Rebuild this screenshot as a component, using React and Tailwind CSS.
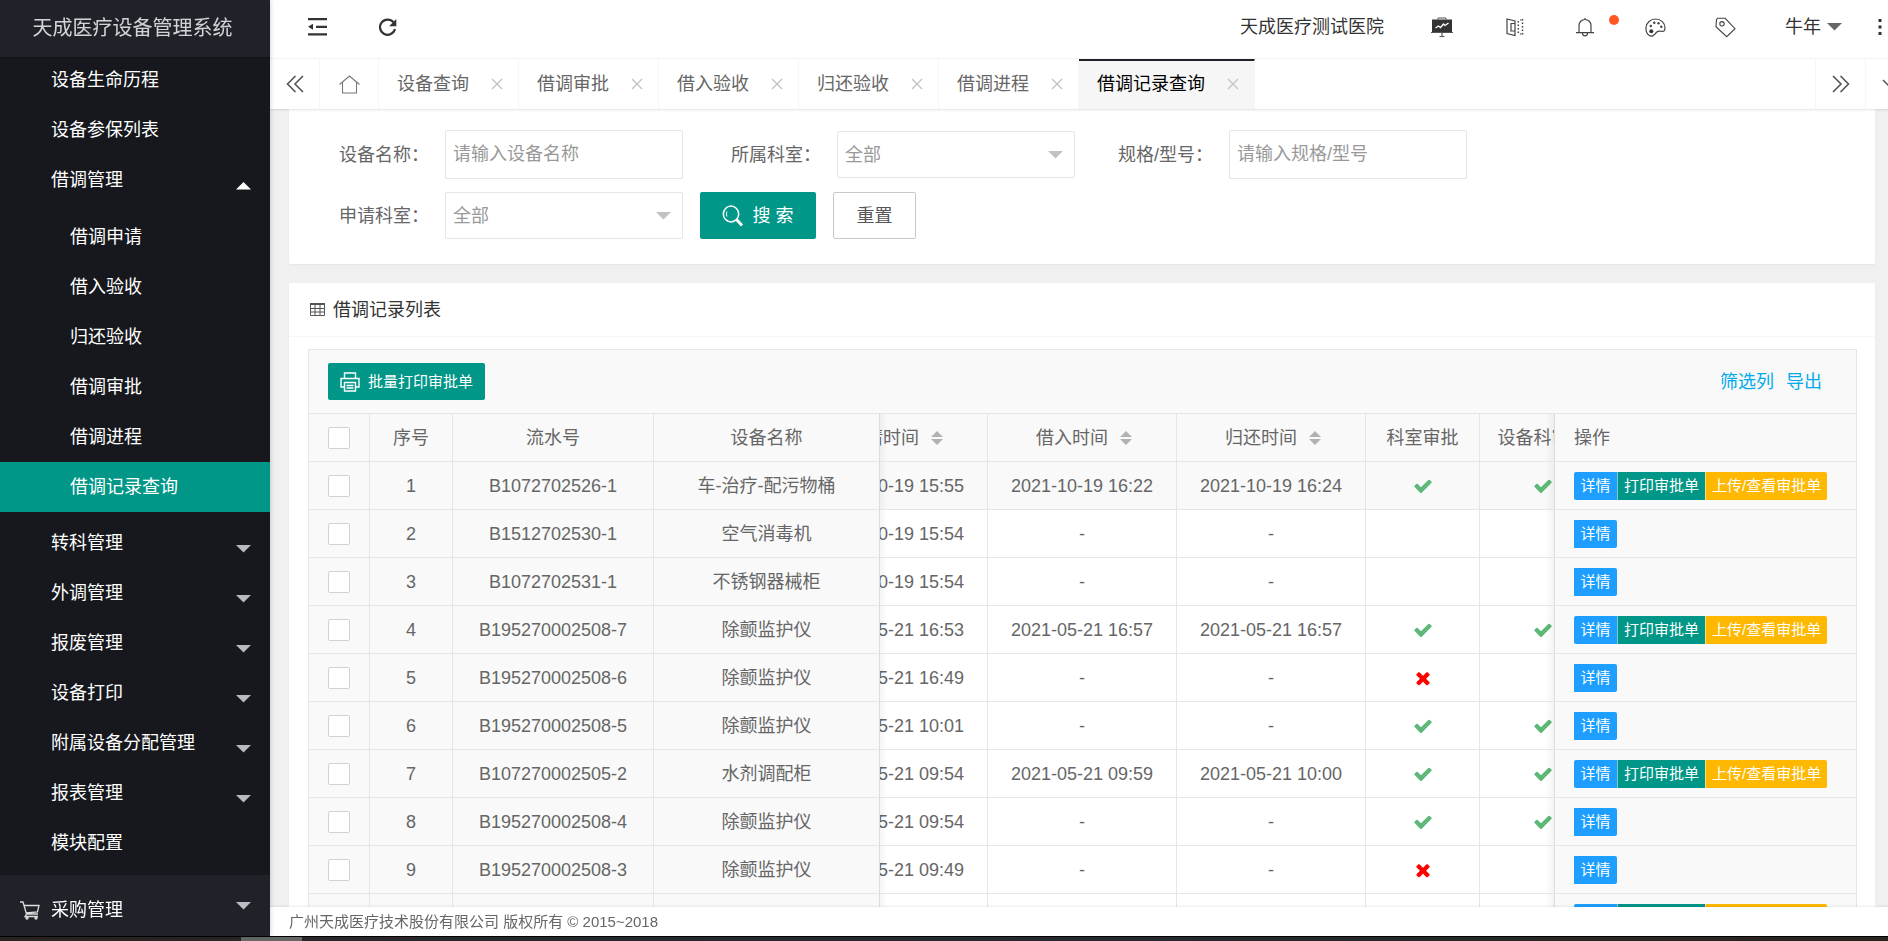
import { useLayoutEffect, useRef, useState } from "react";

const SUB_MENU = ["借调申请", "借入验收", "归还验收", "借调审批", "借调进程", "借调记录查询"];

const MENU = [
  { label: "转科管理", hasChildren: true },
  { label: "外调管理", hasChildren: true },
  { label: "报废管理", hasChildren: true },
  { label: "设备打印", hasChildren: true },
  { label: "附属设备分配管理", hasChildren: true },
  { label: "报表管理", hasChildren: true },
  { label: "模块配置", hasChildren: false },
];

const TABS = ["设备查询", "借调审批", "借入验收", "归还验收", "借调进程", "借调记录查询"];

const ROWS = [
  { no: "B1072702526-1", name: "车-治疗-配污物桶", applied: "2021-10-19 15:55", lent: "2021-10-19 16:22", returned: "2021-10-19 16:24", dept: true, device: true, printable: true },
  { no: "B1512702530-1", name: "空气消毒机", applied: "2021-10-19 15:54", lent: "-", returned: "-" },
  { no: "B1072702531-1", name: "不锈钢器械柜", applied: "2021-10-19 15:54", lent: "-", returned: "-" },
  { no: "B195270002508-7", name: "除颤监护仪", applied: "2021-05-21 16:53", lent: "2021-05-21 16:57", returned: "2021-05-21 16:57", dept: true, device: true, printable: true },
  { no: "B195270002508-6", name: "除颤监护仪", applied: "2021-05-21 16:49", lent: "-", returned: "-", dept: false },
  { no: "B195270002508-5", name: "除颤监护仪", applied: "2021-05-21 10:01", lent: "-", returned: "-", dept: true, device: true },
  { no: "B107270002505-2", name: "水剂调配柜", applied: "2021-05-21 09:54", lent: "2021-05-21 09:59", returned: "2021-05-21 10:00", dept: true, device: true, printable: true },
  { no: "B195270002508-4", name: "除颤监护仪", applied: "2021-05-21 09:54", lent: "-", returned: "-", dept: true, device: true },
  { no: "B195270002508-3", name: "除颤监护仪", applied: "2021-05-21 09:49", lent: "-", returned: "-", dept: false },
  { no: "B195270002508-2", name: "除颤监护仪", applied: "2021-05-21 09:40", lent: "-", returned: "-", dept: true, device: true, printable: true },
];

/* ---------- icons ---------- */

function CaretDown({ className }) {
  return (
    <svg className={className} width="15" height="8" viewBox="0 0 15 8" fill="currentColor" aria-hidden="true">
      <path d="M0 0h15L7.500 7.500z" />
    </svg>
  );
}

function CaretUp({ className }) {
  return (
    <svg className={className} width="15" height="8" viewBox="0 0 15 8" fill="currentColor" aria-hidden="true">
      <path d="M0 7.500h15L7.500 0z" />
    </svg>
  );
}

function IndentIcon() {
  return (
    <svg width="20" height="18" viewBox="0 0 20 18" fill="#333" aria-hidden="true">
      <path d="M0 0h19v2.200H0zM8 7.700h11v2.200H8zM0 15.300h19v2.200H0zM0 8.800l5-3v6z" />
    </svg>
  );
}

function RefreshIcon() {
  return (
    <svg width="20" height="19" viewBox="0 0 20 19" fill="none" aria-hidden="true">
      <path d="M15.500 4.300A7.600 7.600 0 1 0 17 11" stroke="#333" strokeWidth="2.200" />
      <path d="M18.300 1v7.200h-7.200z" fill="#333" />
    </svg>
  );
}

function BoardIcon() {
  return (
    <svg width="22" height="21" viewBox="0 0 22 21" fill="none" aria-hidden="true">
      <path d="M7 2.500V1h8v1.500" stroke="#555" />
      <path d="M1 2.500h20V15H1z" fill="#333" />
      <path d="M0 15.500h22M11 16v4M8.500 19.500h5" stroke="#555" strokeWidth="1.200" />
      <path d="M4.500 11l3-2 2 1.500 3-3.500 1.500 1.500L17.500 6" stroke="#fff" strokeWidth="1.300" />
    </svg>
  );
}

function BookIcon() {
  return (
    <svg width="18" height="19" viewBox="0 0 18 19" fill="none" stroke="#444" strokeWidth="1.200" aria-hidden="true">
      <path d="M1 1l8 2v14.500l-8-2z" />
      <path d="M9 5.500H5v7.500h4" />
      <path d="M12.300 3v14M16.500 1v16" strokeWidth="1.500" strokeDasharray="1.500 2" />
      <path d="M14 2h1.500M14 16h1.500" />
    </svg>
  );
}

function BellIcon() {
  return (
    <svg width="18" height="20" viewBox="0 0 18 20" fill="none" stroke="#444" strokeWidth="1.200" aria-hidden="true">
      <path d="M3 15.500V8.500a6 6 0 0 1 12 0v7M0 15.700h18M9 1v1.500M6.500 16a2.500 2.800 0 0 0 5 0" />
    </svg>
  );
}

function PaletteIcon() {
  return (
    <svg width="21" height="19" viewBox="0 0 21 19" fill="none" aria-hidden="true">
      <path
        d="M4.500 17.500C2 16 .8 12.500 1 9.500 1.400 4.700 5.500 1 10.500 1 16 1 20 5 20 9.800c0 3-1.300 3.900-3.200 3.500-2-.4-3.300-.8-5 .7-1.600 1.500-1.800 2.600-3.600 3.600-1.200.6-2.600.6-3.700-.1z"
        stroke="#444"
        strokeWidth="1.200"
      />
      <circle cx="6.300" cy="13.200" r="2" fill="#333" />
      <circle cx="5.800" cy="8" r="1.200" fill="#444" />
      <circle cx="9.300" cy="4.800" r="1.200" fill="#444" />
      <circle cx="13.500" cy="5.300" r="1.200" fill="#444" />
      <circle cx="16.300" cy="8.800" r="1.200" fill="#444" />
    </svg>
  );
}

function TagIcon() {
  return (
    <svg width="21" height="21" viewBox="0 0 21 21" fill="none" stroke="#444" strokeWidth="1.100" aria-hidden="true">
      <path d="M1.500 2.500l1-1.200h7.700L20 11.700l-8.300 8L1 9.700z" />
      <circle cx="7" cy="6.800" r="2.200" />
    </svg>
  );
}

function HomeIcon() {
  return (
    <svg width="21" height="19" viewBox="0 0 21 19" fill="none" stroke="#777" strokeWidth="1.100" aria-hidden="true">
      <path d="M.5 9.500L10.500 1l10 8.500M3.500 7.500v10.500h14V7.500" />
    </svg>
  );
}

function DoubleChevron({ className }) {
  return (
    <svg className={className} width="18" height="18" viewBox="0 0 18 18" fill="none" stroke="#555" strokeWidth="1.600" aria-hidden="true">
      <path d="M9.500 1L1.500 9l8 8M17 1L9 9l8 8" />
    </svg>
  );
}

function SearchIcon() {
  return (
    <svg width="22" height="22" viewBox="0 0 22 22" fill="none" stroke="#fff" aria-hidden="true">
      <ellipse cx="9" cy="9" rx="7.700" ry="7.900" strokeWidth="1.500" />
      <path d="M5 11.500a5 5 0 0 1 0-5" strokeWidth="1" />
      <path d="M14.500 14.500l5.500 6" strokeWidth="3" />
    </svg>
  );
}

function PrinterIcon() {
  return (
    <svg width="20" height="20" viewBox="0 0 20 20" fill="none" stroke="#fff" strokeWidth="1.400" aria-hidden="true">
      <path d="M4.500 6V1h11v5M4.500 15H1V6.500h18V15h-3.500" />
      <path d="M4.500 10.500h11V19h-11zM6.500 13.500h7M6.500 16h7" />
    </svg>
  );
}

function GridIcon() {
  return (
    <svg width="15" height="13" viewBox="0 0 15 13" fill="none" stroke="#555" aria-hidden="true">
      <path d="M.5 1.500h14v11H.5zM.5 5.500h14M.5 9h14M5 1.500v11M10 1.500v11" />
      <path d="M0 1h15" strokeWidth="2" />
    </svg>
  );
}

function CartIcon() {
  return (
    <svg width="20" height="19" viewBox="0 0 20 19" fill="none" stroke="#ddd" strokeWidth="1.300" aria-hidden="true">
      <path d="M0 1h3l3.500 12h11.500M4 4.500h15l-1.500 6.500-11.500 1M6.500 13L5 15.500h13" />
      <circle cx="7" cy="17" r="1" fill="#ddd" />
      <circle cx="16" cy="17" r="1" fill="#ddd" />
    </svg>
  );
}

function SortIcon() {
  return (
    <svg width="12" height="14" viewBox="0 0 12 14" fill="#b2b2b2" aria-hidden="true">
      <path d="M6 0l6 6H0zM6 14l6-6H0z" />
    </svg>
  );
}

function ApprovalMark({ value }) {
  if (value === undefined) return null;
  return value ? (
    <svg className="mx-auto" width="20" height="20" viewBox="0 0 1792 1792" fill="#5FB878" role="img" aria-label="通过">
      <path d="M1671 566q0 40-28 68l-724 724-136 136q-28 28-68 28t-68-28l-136-136-362-362q-28-28-28-68t28-68l136-136q28-28 68-28t68 28l294 295 656-657q28-28 68-28t68 28l136 136q28 28 28 68z" />
    </svg>
  ) : (
    <svg className="mx-auto" width="20" height="20" viewBox="0 0 1792 1792" fill="#f00" role="img" aria-label="不通过">
      <path d="M1490 1322q0 40-28 68l-136 136q-28 28-68 28t-68-28l-294-294-294 294q-28 28-68 28t-68-28l-136-136q-28-28-28-68t28-68l294-294-294-294q-28-28-28-68t28-68l136-136q28-28 68-28t68 28l294 294 294-294q28-28 68-28t68 28l136 136q28 28 28 68t-28 68l-294 294 294 294q28 28 28 68z" />
    </svg>
  );
}

/* ---------- sidebar ---------- */

function Sidebar() {
  const [active, setActive] = useState("借调记录查询");

  return (
    <aside className="relative z-30 flex w-[270px] shrink-0 flex-col overflow-hidden bg-[#20222a] text-lg text-white shadow-[1px_0_4px_rgba(0,0,0,0.15)]">
      <h1 className="z-10 flex h-[57px] shrink-0 items-center justify-center bg-[#20222a] pr-[5px] pb-0.5 text-xl text-white/80 shadow-[0_1px_2px_rgba(0,0,0,0.3)]">
        天成医疗设备管理系统
      </h1>
      <nav className="-mt-0.5">
        <div className="bg-[#16181d] pb-[7px]">
          {["设备生命历程", "设备参保列表"].map((label) => (
            <a key={label} href="#" className="flex h-[50px] items-center pl-[51px]">
              {label}
            </a>
          ))}
          <button type="button" className="flex h-[50px] w-full items-center justify-between pr-[19px] pl-[51px]">
            借调管理
            <CaretUp className="mt-3" />
          </button>
          <div className="pt-[7px] pb-[6px]">
            {SUB_MENU.map((label) => (
              <a
                key={label}
                href="#"
                onClick={() => setActive(label)}
                className={`flex h-[50px] items-center pl-[70px] ${active === label ? "bg-[#009688]" : ""}`}
              >
                {label}
              </a>
            ))}
          </div>
          {MENU.map((item) => (
            <button
              key={item.label}
              type="button"
              className="flex h-[50px] w-full items-center justify-between pr-[19px] pl-[51px]"
            >
              {item.label}
              {item.hasChildren && <CaretDown className="mt-3 text-white/70" />}
            </button>
          ))}
        </div>
        <button type="button" className="flex h-[70px] w-full items-center pr-[19px] pl-5">
          <CartIcon />
          <span className="ml-[11px] flex-1 text-left">采购管理</span>
          <CaretDown className="mb-2 text-white/70" />
        </button>
      </nav>
    </aside>
  );
}

/* ---------- top bars ---------- */

function Header() {
  return (
    <header className="flex h-[59px] shrink-0 items-center border-b border-[#f6f6f6] bg-white pr-[6px] pb-1 pl-[38px] text-lg text-[#333]">
      <button type="button" aria-label="侧边伸缩">
        <IndentIcon />
      </button>
      <button type="button" aria-label="刷新" className="ml-[50px]">
        <RefreshIcon />
      </button>
      <div className="ml-auto flex items-center">
        <span>天成医疗测试医院</span>
        <button type="button" aria-label="大屏" className="ml-5 flex w-[76px] justify-center">
          <BoardIcon />
        </button>
        <button type="button" aria-label="手册" className="flex w-[70px] justify-center">
          <BookIcon />
        </button>
        <button type="button" aria-label="消息" className="relative flex w-[70px] justify-center">
          <BellIcon />
          <span className="absolute -top-0.5 right-px size-2.5 rounded-full bg-[#ff5722]" />
        </button>
        <button type="button" aria-label="主题" className="flex w-[70px] justify-center">
          <PaletteIcon />
        </button>
        <button type="button" aria-label="便签" className="flex w-[70px] justify-center">
          <TagIcon />
        </button>
        <button type="button" className="ml-[25px] flex items-center gap-[6px]">
          牛年
          <CaretDown className="text-[#666]" />
        </button>
        <button type="button" aria-label="更多" className="ml-9">
          <svg width="4" height="16" viewBox="0 0 4 16" fill="#333" aria-hidden="true">
            <path d="M.5 0h3v3h-3zM.5 6.500h3v3h-3zM.5 13h3v3h-3z" />
          </svg>
        </button>
      </div>
    </header>
  );
}

function TabBar() {
  const [current, setCurrent] = useState("借调记录查询");

  return (
    <div className="z-20 flex h-[50px] shrink-0 overflow-x-clip bg-white text-lg text-[#666] shadow-[0_1px_2px_rgba(0,0,0,0.12)]">
      <button type="button" aria-label="向左" className="flex w-[50px] shrink-0 items-center justify-center border-r border-[#f6f6f6]">
        <DoubleChevron />
      </button>
      <button type="button" aria-label="首页" className="flex w-[59px] shrink-0 items-center justify-center border-r border-[#f6f6f6]">
        <HomeIcon />
      </button>
      {TABS.map((tab) => (
        <div
          key={tab}
          className={`flex shrink-0 items-center border-t-2 border-r border-r-[#f6f6f6] pr-[15px] pb-0.5 pl-[18px] ${
            tab === current ? "border-t-[#20222a] bg-[#f6f6f6] text-black" : "border-t-transparent"
          }`}
        >
          <button type="button" onClick={() => setCurrent(tab)}>
            {tab}
          </button>
          <button type="button" aria-label={`关闭${tab}`} className="ml-[22px]">
            <svg width="12" height="12" viewBox="0 0 12 12" stroke="#c2c2c2" strokeWidth="1.300" aria-hidden="true">
              <path d="M1 1l10 10M11 1L1 11" />
            </svg>
          </button>
        </div>
      ))}
      <button type="button" aria-label="向右" className="ml-auto flex w-[50px] shrink-0 items-center justify-center border-l border-[#f6f6f6]">
        <DoubleChevron className="rotate-180" />
      </button>
      <button type="button" aria-label="页签操作" className="-mr-[27px] flex w-[50px] shrink-0 items-center justify-center border-l border-[#f6f6f6]">
        <svg width="18" height="10" viewBox="0 0 18 10" fill="none" stroke="#555" strokeWidth="1.500" aria-hidden="true">
          <path d="M1 1l8 8 8-8" />
        </svg>
      </button>
    </div>
  );
}

/* ---------- search form ---------- */

function Field({ id, label, children }) {
  return (
    <div className="flex items-center">
      <label htmlFor={id} className="w-[154px] pr-4 text-right whitespace-nowrap">
        {label}：
      </label>
      {children}
    </div>
  );
}

function TextInput({ id, placeholder }) {
  return (
    <input
      id={id}
      type="text"
      placeholder={placeholder}
      className="h-[49px] w-[238px] rounded-xs border border-[#e6e6e6] px-[7px] placeholder:text-[#999]"
    />
  );
}

function SelectInput({ id }) {
  return (
    <div className="relative">
      <select id={id} className="h-[47px] w-[238px] appearance-none rounded-xs border border-[#e6e6e6] bg-white px-[7px] text-[#999]">
        <option>全部</option>
      </select>
      <CaretDown className="pointer-events-none absolute top-5 right-3 text-[#c2c2c2]" />
    </div>
  );
}

function SearchForm() {
  return (
    <form className="rounded-b-xs bg-white pt-[21px] pr-4 pb-[25px] pl-[2px] shadow-[0_1px_2px_rgba(0,0,0,0.05)]">
      <div className="flex flex-wrap items-center">
        <Field id="device-name" label="设备名称">
          <TextInput id="device-name" placeholder="请输入设备名称" />
        </Field>
        <Field id="owner-dept" label="所属科室">
          <SelectInput id="owner-dept" />
        </Field>
        <Field id="model" label="规格/型号">
          <TextInput id="model" placeholder="请输入规格/型号" />
        </Field>
      </div>
      <div className="mt-[13px] flex items-center gap-[17px]">
        <Field id="apply-dept" label="申请科室">
          <SelectInput id="apply-dept" />
        </Field>
        <button type="button" className="flex h-[47px] w-[116px] items-center justify-center gap-2 rounded-xs bg-[#009688] text-white">
          <SearchIcon />
          搜 索
        </button>
        <button type="reset" className="h-[47px] w-[83px] rounded-xs border border-[#c9c9c9] bg-white text-[#555]">
          重置
        </button>
      </div>
    </form>
  );
}

/* ---------- table ---------- */

const CELL = "h-12 border-r border-b border-[#e6e6e6] p-0 text-center font-normal whitespace-nowrap";
const FIXED = "sticky z-10 bg-[#f9f9f9]";
const LEFT_EDGE =
  "after:absolute after:inset-y-0 after:left-full after:w-2 after:bg-gradient-to-r after:from-black/5 after:to-transparent";
const FIXED_RIGHT =
  "sticky right-0 z-10 h-12 border-b border-l border-[#e6e6e6] bg-[#f9f9f9] p-0 text-left font-normal before:absolute before:inset-y-0 before:right-full before:w-2.5 before:bg-gradient-to-l before:from-black/5 before:to-transparent";

function Checkbox({ label }) {
  return (
    <input
      type="checkbox"
      aria-label={label}
      className="ml-[19px] block size-[22px] appearance-none rounded-xs border border-[#d2d2d2] bg-white checked:bg-[#5FB878]"
    />
  );
}

function SortHeader({ children }) {
  return (
    <button type="button" className="inline-flex items-center gap-3 pl-1">
      {children}
      <SortIcon />
    </button>
  );
}

function RowActions({ printable }) {
  return (
    <div className="ml-[19px] flex h-7 text-[15px] text-white">
      <button type="button" className={`w-[43px] bg-[#1e9fff] text-center ${printable ? "rounded-l-xs" : "rounded-r-xs"}`}>
        详情
      </button>
      {printable && (
        <>
          <button type="button" className="border-l border-white/50 bg-[#009688] px-[6px]">
            打印审批单
          </button>
          <button type="button" className="rounded-r-xs border-l border-white/50 bg-[#ffb800] px-[6px]">
            上传/查看审批单
          </button>
        </>
      )}
    </div>
  );
}

function RecordTable() {
  const scroller = useRef(null);

  useLayoutEffect(() => {
    scroller.current.scrollLeft = 81;
  }, []);

  return (
    <div ref={scroller} className="overflow-x-auto">
      <table className="w-[1680px] min-w-full table-fixed border-separate border-spacing-0">
        <colgroup>
          <col className="w-[61px]" />
          <col className="w-[83px]" />
          <col className="w-[201px]" />
          <col className="w-[226px]" />
          <col className="w-[189px]" />
          <col className="w-[189px]" />
          <col className="w-[189px]" />
          <col className="w-[114px]" />
          <col className="w-[126px]" />
          <col className="w-[302px]" />
        </colgroup>
        <thead className="bg-[#f9f9f9]">
          <tr>
            <th className={`${CELL} ${FIXED} left-0`}>
              <Checkbox label="全选" />
            </th>
            <th className={`${CELL} ${FIXED} left-[61px]`}>序号</th>
            <th className={`${CELL} ${FIXED} left-[144px]`}>流水号</th>
            <th className={`${CELL} ${FIXED} ${LEFT_EDGE} left-[345px]`}>设备名称</th>
            <th className={CELL}>
              <SortHeader>申请时间</SortHeader>
            </th>
            <th className={CELL}>
              <SortHeader>借入时间</SortHeader>
            </th>
            <th className={CELL}>
              <SortHeader>归还时间</SortHeader>
            </th>
            <th className={CELL}>科室审批</th>
            <th className={CELL}>设备科审批</th>
            <th className={FIXED_RIGHT}>
              <span className="ml-[19px]">操作</span>
            </th>
          </tr>
        </thead>
        <tbody>
          {ROWS.map((row, i) => (
            <tr key={row.no} className={i === 0 ? "bg-[#f9f9f9]" : "bg-white hover:bg-[#f9f9f9]"}>
              <td className={`${CELL} ${FIXED} left-0`}>
                <Checkbox label={`选择 ${row.no}`} />
              </td>
              <td className={`${CELL} ${FIXED} left-[61px]`}>{i + 1}</td>
              <td className={`${CELL} ${FIXED} left-[144px]`}>{row.no}</td>
              <td className={`${CELL} ${FIXED} ${LEFT_EDGE} left-[345px]`}>{row.name}</td>
              <td className={CELL}>{row.applied}</td>
              <td className={CELL}>{row.lent}</td>
              <td className={CELL}>{row.returned}</td>
              <td className={CELL}>
                <ApprovalMark value={row.dept} />
              </td>
              <td className={CELL}>
                <ApprovalMark value={row.device} />
              </td>
              <td className={FIXED_RIGHT}>
                <RowActions printable={row.printable} />
              </td>
            </tr>
          ))}
        </tbody>
      </table>
    </div>
  );
}

function RecordCard() {
  return (
    <section className="mt-[19px] rounded-xs bg-white shadow-[0_1px_2px_rgba(0,0,0,0.05)]">
      <h2 className="flex h-[54px] items-center gap-2 border-b border-[#f6f6f6] pl-[21px] text-[#333]">
        <GridIcon />
        借调记录列表
      </h2>
      <div className="py-3 pr-[18px] pl-[19px]">
        <div className="border border-[#e6e6e6]">
          <div className="flex h-16 items-center justify-between border-b border-[#e6e6e6] bg-[#f9f9f9] pr-[34px] pl-[19px]">
            <button type="button" className="flex h-[37px] items-center gap-2 rounded-xs bg-[#009688] px-3 text-[15px] text-white">
              <PrinterIcon />
              批量打印审批单
            </button>
            <div className="flex gap-3 text-[#01aaed]">
              <a href="#">筛选列</a>
              <a href="#">导出</a>
            </div>
          </div>
          <RecordTable />
        </div>
      </div>
    </section>
  );
}

export default function App() {
  return (
    <div className="flex h-screen flex-col overflow-hidden font-['Liberation_Sans','Noto_Sans_CJK_SC',sans-serif]">
      <div className="flex min-h-0 flex-1">
        <Sidebar />
        <div className="flex min-w-0 flex-1 flex-col">
          <Header />
          <TabBar />
          <main className="min-h-0 flex-1 overflow-hidden bg-[#f0f0f0] pr-[13px] pl-[19px] text-lg text-[#666]">
            <SearchForm />
            <RecordCard />
          </main>
          <footer className="z-20 flex h-[29px] shrink-0 items-center bg-white pt-0.5 pl-[19px] text-[15px] text-[#666] shadow-[0_-1px_2px_rgba(0,0,0,0.08)]">
            广州天成医疗技术股份有限公司 版权所有 © 2015~2018
          </footer>
        </div>
      </div>
      <div className="h-[5px] shrink-0 border-t border-black bg-gradient-to-r from-[#2a2524] via-[#262a33] to-[#29251f]">
        <div className="ml-[241px] h-1 w-[61px] bg-[#666]" />
      </div>
    </div>
  );
}
